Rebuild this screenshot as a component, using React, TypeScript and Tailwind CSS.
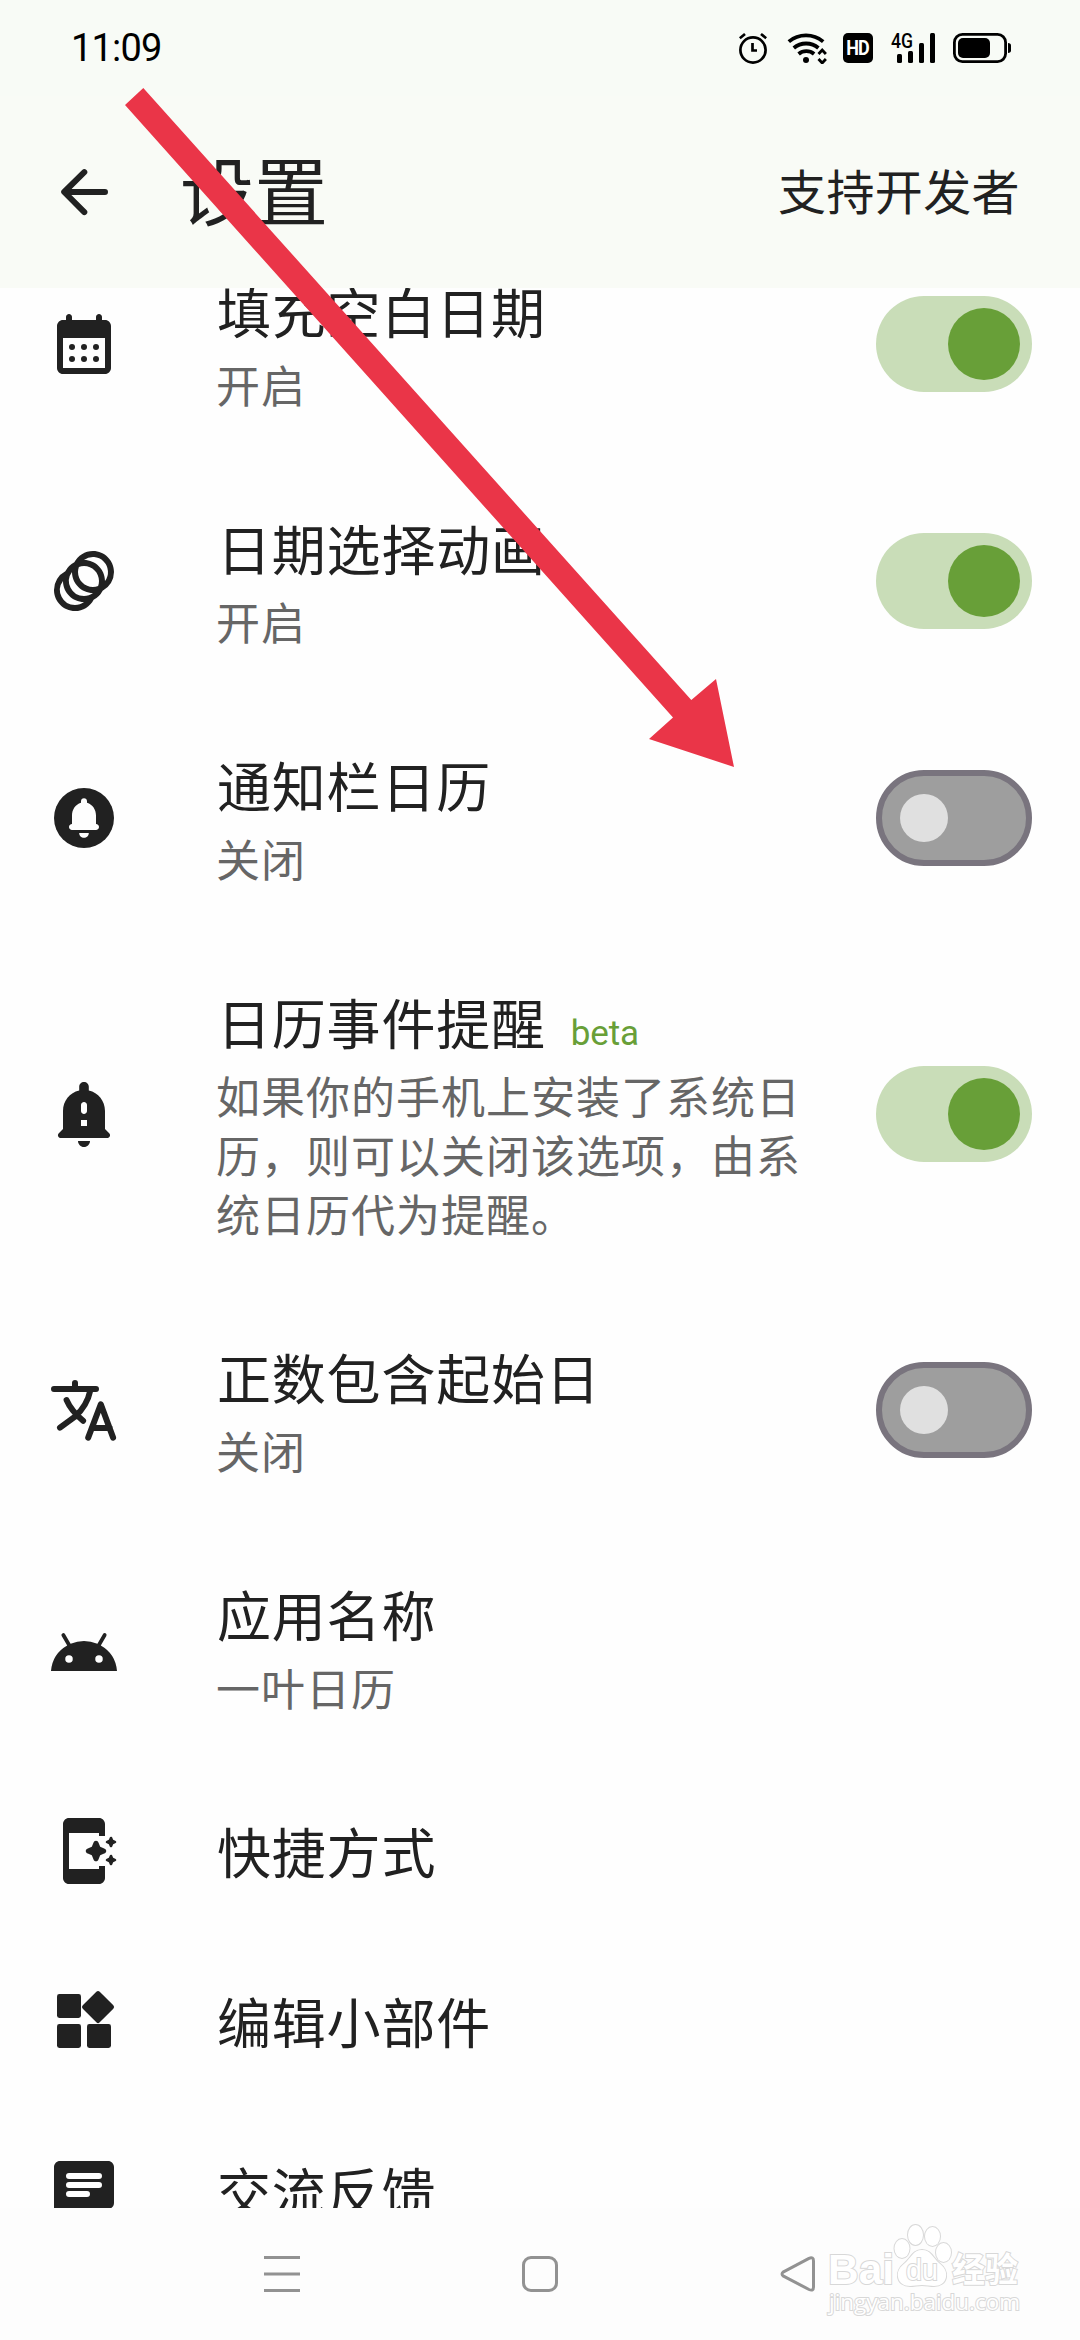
import type { ReactNode } from 'react';
import { MdAndroid, MdAnimation } from 'react-icons/md';

const Icon = ({ children }: { children: ReactNode }) => (
  <svg viewBox="0 0 24 24" className="size-[72px]" fill="currentColor">
    {children}
  </svg>
);

const BackIcon = () => (
  <svg
    viewBox="0 0 24 24"
    className="size-[72px]"
    fill="none"
    stroke="currentColor"
    strokeWidth="2"
    strokeLinecap="round"
    strokeLinejoin="round"
  >
    <path d="M12.1 5.4 5.4 12l6.7 6.7M5.8 12H19" />
  </svg>
);

const CalendarIcon = () => (
  <Icon>
    <path
      fillRule="evenodd"
      d="M7 2c.55 0 1 .45 1 1v1h8V3c0-.55.45-1 1-1s1 .45 1 1v1h1c1.1 0 2 .9 2 2v14c0 1.1-.9 2-2 2H5c-1.1 0-2-.9-2-2V6c0-1.1.9-2 2-2h1V3c0-.55.45-1 1-1ZM5 10v10h14V10Z"
    />
    {[8, 12, 16].map((x) => (
      <g key={x}>
        <circle cx={x} cy="13" r="1" />
        <circle cx={x} cy="17" r="1" />
      </g>
    ))}
  </Icon>
);

const CircleBellIcon = () => (
  <Icon>
    <circle cx="12" cy="12" r="10" />
    <path
      fill="#fefefe"
      d="M12 5.4c-.6 0-1 .4-1 1v.5C9.1 7.5 8 9.2 8 11.2V14c-.55 0-1 .45-1 1s.45 1 1 1h8c.55 0 1-.45 1-1s-.45-1-1-1v-2.8c0-2-1.1-3.7-3-4.3v-.5c0-.6-.4-1-1-1ZM10.4 17h3.2c0 .9-.7 1.6-1.6 1.6s-1.6-.7-1.6-1.6Z"
    />
  </Icon>
);

const ImportantBellIcon = () => (
  <Icon>
    <path
      fillRule="evenodd"
      d="M12 1.3c-.9 0-1.6.7-1.6 1.6v1.3C7.2 4.9 5 7.7 5 11v6l-1.4 1.4c-.6.6-.2 1.6.7 1.6h15.4c.9 0 1.3-1 .7-1.6L19 17v-6c0-3.3-2.2-6.1-5.4-6.8V2.9c0-.9-.7-1.6-1.6-1.6ZM12 8c.55 0 1 .45 1 1v2c0 .55-.45 1-1 1s-1-.45-1-1V9c0-.55.45-1 1-1Zm-1 6h2v2h-2ZM10 21h4c0 1.1-.9 2-2 2s-2-.9-2-2Z"
    />
  </Icon>
);

const TranslateIcon = () => (
  <svg
    viewBox="0 0 24 24"
    className="size-[72px]"
    fill="none"
    stroke="currentColor"
    strokeWidth="2"
    strokeLinecap="round"
    strokeLinejoin="round"
  >
    <path d="M2 5h14M9 3v2M14.1 5.5C13.4 8.8 11.7 11.8 9 14.2L4 17.9M6.2 8.7C7.3 11.3 9 13.3 11.7 15.6M13.4 21.2l4.2-11.1 4.1 11.1M14.6 18h6" />
  </svg>
);

const Sparkle = ({ x, y, r }: { x: number; y: number; r: number }) => (
  <path
    transform={`translate(${x} ${y}) scale(${r})`}
    d="M0-1c.14 0 .2.07.25.2l.16.39.39.16c.13.05.2.11.2.25s-.07.2-.2.25l-.39.16-.16.39C.2.93.14 1 0 1s-.2-.07-.25-.2l-.16-.39-.39-.16C-.93.2-1 .14-1 0s.07-.2.2-.25l.39-.16.16-.39C-.2-.93-.14-1 0-1Z"
  />
);

const ShortcutIcon = () => (
  <Icon>
    <path d="M7 1h10c1.1 0 2 .9 2 2v4h-2V6H7v12h10v-1h2v4c0 1.1-.9 2-2 2H7c-1.1 0-2-.9-2-2V3c0-1.1.9-2 2-2Z" />
    <Sparkle x={16} y={12} r={3.4} />
    <Sparkle x={21} y={9} r={1.75} />
    <Sparkle x={21} y={15} r={1.75} />
  </Icon>
);

const WidgetsIcon = () => (
  <Icon>
    <rect x="3" y="3" width="8" height="8" rx="0.8" />
    <rect x="3" y="13" width="8" height="8" rx="0.8" />
    <rect x="13" y="13" width="8" height="8" rx="0.8" />
    <rect x="12.68" y="3.34" width="8" height="8" rx="0.8" transform="rotate(45 16.68 7.34)" />
  </Icon>
);

const FeedbackIcon = () => (
  <Icon>
    <path
      fillRule="evenodd"
      d="M4 2h16c1.1 0 2 .9 2 2v12c0 1.1-.9 2-2 2H6l-4 4V4c0-1.1.9-2 2-2ZM7 6a1 1 0 0 0 0 2h10a1 1 0 0 0 0-2ZM7 9a1 1 0 0 0 0 2h10a1 1 0 0 0 0-2ZM7 12a1 1 0 0 0 0 2h6a1 1 0 0 0 0-2Z"
    />
  </Icon>
);

const Toggle = ({ on }: { on: boolean }) =>
  on ? (
    <div className="flex h-24 w-[156px] items-center justify-end rounded-full bg-[#c9ddb8] pr-3">
      <div className="size-[72px] rounded-full bg-[#689f38]" />
    </div>
  ) : (
    <div className="flex h-24 w-[156px] items-center rounded-full border-[6px] border-[#79747e] bg-[#9e9e9e] pl-[18px]">
      <div className="size-12 rounded-full bg-[#e0e0e0]" />
    </div>
  );

type Item = {
  title: string;
  icon: ReactNode;
  height: string;
  lines?: string[];
  badge?: string;
  on?: boolean;
};

const items: Item[] = [
  { title: '填充空白日期', lines: ['开启'], icon: <CalendarIcon />, on: true, height: 'h-[237px]' },
  { title: '日期选择动画', lines: ['开启'], icon: <MdAnimation className="size-[72px]" />, on: true, height: 'h-[237px]' },
  { title: '通知栏日历', lines: ['关闭'], icon: <CircleBellIcon />, on: false, height: 'h-[237px]' },
  {
    title: '日历事件提醒',
    badge: 'beta',
    lines: ['如果你的手机上安装了系统日', '历，则可以关闭该选项，由系', '统日历代为提醒。'],
    icon: <ImportantBellIcon />,
    on: true,
    height: 'h-[355px]',
  },
  { title: '正数包含起始日', lines: ['关闭'], icon: <TranslateIcon />, on: false, height: 'h-[237px]' },
  { title: '应用名称', lines: ['一叶日历'], icon: <MdAndroid className="mt-3 size-[72px]" />, height: 'h-[237.5px]' },
  { title: '快捷方式', icon: <ShortcutIcon />, height: 'h-[170px]' },
  { title: '编辑小部件', icon: <WidgetsIcon />, height: 'h-[170px]' },
  { title: '交流反馈', icon: <FeedbackIcon />, height: 'h-[170px]' },
];

const Row = ({ item }: { item: Item }) => (
  <div className={`flex shrink-0 items-center px-12 ${item.height}`}>
    <div className="w-[72px] shrink-0">{item.icon}</div>
    <div className="ml-[96px] flex-1">
      <div
        className={`flex items-baseline whitespace-nowrap pl-px text-[54px] leading-[80px] tracking-[0.8px] ${
          item.lines ? '-mt-1 mb-1' : '-mt-px'
        }`}
      >
        {item.title}
        {item.badge && (
          <span className="ml-[25px] font-[Roboto] text-[35px] leading-none tracking-[-0.2px] text-[#689f38]">{item.badge}</span>
        )}
      </div>
      {item.lines && (
        <div className="text-[44px] leading-[59px] tracking-[1px] text-[#666]">
          {item.lines.map((line) => (
            <div key={line} className="whitespace-nowrap">
              {line}
            </div>
          ))}
        </div>
      )}
    </div>
    {item.on !== undefined && <Toggle on={item.on} />}
  </div>
);

const StatusBar = () => (
  <div className="flex h-24 shrink-0 items-center bg-[#f8fbf6] pl-[71px] pr-[69px] text-black">
    <span className="flex-1 font-[Roboto] text-[38px] leading-none tracking-[-0.8px]">11:09</span>
    <svg className="h-8 w-7" viewBox="0 0 28 32" fill="none" stroke="currentColor" strokeWidth="2.7">
      <circle cx="14" cy="18" r="12.6" />
      <path d="M13.5 11v7.5H18M.8 6.3 6 2M22 2l5.200 4.300" />
    </svg>
    <svg className="ml-5 h-8 w-10" viewBox="0 0 40 32" fill="none" stroke="currentColor" strokeWidth="3.8">
      <path d="M1.8 9.6a27 27 0 0 1 34.4 0M6.8 16a19 19 0 0 1 24.600 0M11.6 22a12 12 0 0 1 15.5 0" />
      <path d="m31.5 22 3.700-4 3.700 4M31.5 27l3.700 4 3.700-4" strokeWidth="2.8" />
      <circle cx="19" cy="28" r="3" fill="currentColor" stroke="none" />
    </svg>
    <div className="ml-4 flex h-[30px] w-[30px] items-center justify-center rounded-[5px] bg-black font-[Roboto] text-[20px] font-bold leading-none tracking-[-1px] text-white">
      <span className="scale-x-90">HD</span>
    </div>
    <svg className="ml-[18px] h-[30px] w-[45px] overflow-visible" viewBox="0 0 45 30" fill="currentColor">
      <text x="0" y="15" fontSize="20" fontFamily="Roboto" fontWeight="500" textLength="22" lengthAdjust="spacingAndGlyphs">
        4G
      </text>
      <rect x="6" y="21" width="5" height="9" rx="1.5" />
      <rect x="17" y="18" width="5" height="12" rx="1.5" />
      <rect x="28" y="10" width="5" height="20" rx="1.5" />
      <rect x="39" y="0" width="5" height="30" rx="1.5" />
    </svg>
    <svg className="ml-[17px] h-[30px] w-[58px]" viewBox="0 0 58 30" fill="currentColor">
      <rect x="1.4" y="1.4" width="51.2" height="27.2" rx="8" fill="none" stroke="currentColor" strokeWidth="2.8" />
      <rect x="5" y="5" width="32" height="20" rx="5" />
      <path d="M55 10c2 0 3 1 3 2.500v5c0 1.500-1 2.500-3 2.500Z" />
    </svg>
  </div>
);

const Watermark = () => (
  <svg
    className="absolute bottom-[16px] left-[824px] h-[104px] w-[204px]"
    viewBox="824 2220 204 104"
    fill="#fff"
    stroke="#d8d8d8"
    strokeWidth="2"
    paintOrder="stroke"
  >
    <text x="828" y="2284" fontSize="43" fontWeight="700" fontFamily="Liberation Sans" textLength="66" lengthAdjust="spacingAndGlyphs">
      Bai
    </text>
    <ellipse cx="902" cy="2248.5" rx="7.5" ry="9.5" />
    <ellipse cx="915.5" cy="2235" rx="7.5" ry="10" />
    <ellipse cx="932.5" cy="2236.5" rx="7.5" ry="9.5" />
    <ellipse cx="943.5" cy="2252.5" rx="7.5" ry="9.5" />
    <path d="M922 2250c-9 0-11 8-17 13-5 4-8 8-7 14s6 9 12 9c4 0 8-1 12-1s8 1 12 1c6 0 11-3 12-9s-2-10-7-14c-6-5-8-13-17-13Z" />
    <text x="906" y="2280" fontSize="30" fontFamily="Liberation Sans" textLength="32" lengthAdjust="spacingAndGlyphs">
      du
    </text>
    <text x="952" y="2282" fontSize="34" fontWeight="700" fontFamily="Noto Sans CJK SC" textLength="66" lengthAdjust="spacingAndGlyphs">
      经验
    </text>
    <text x="829" y="2310" fontSize="22" fontFamily="Open Sans" textLength="191" lengthAdjust="spacingAndGlyphs">
      jingyan.baidu.com
    </text>
  </svg>
);

const NavBar = () => (
  <div className="relative flex h-[132px] shrink-0 items-center bg-[#fdfdfd] pl-[264px] text-[#929292]">
    <svg className="h-9 w-9" viewBox="0 0 36 36" stroke="currentColor" strokeWidth="3">
      <path d="M0 1.5h36M0 18h36M0 34.5h36" />
    </svg>
    <div className="ml-[222px] size-9 rounded-[9px] border-[3px] border-[#929292]" />
    <svg className="ml-[222px] h-9 w-9" viewBox="0 0 36 36" fill="none" stroke="currentColor" strokeWidth="3" strokeLinejoin="round">
      <path d="M3.5 15.8 29 2.3Q33.5.5 33.5 5v26q0 4.500-4.500 2.500L3.5 20.200Q.5 18 3.5 15.8Z" />
    </svg>
    <Watermark />
  </div>
);

export default function App() {
  return (
    <div className="relative flex h-[2340px] w-[1080px] flex-col overflow-hidden bg-[#fefefe] font-['Noto_Sans_CJK_SC',sans-serif] text-[#212121]">
      <StatusBar />
      <header className="flex h-48 shrink-0 items-center bg-[#f9fbf6] pl-12 pr-[60px]">
        <BackIcon />
        <h1 className="-mt-2 ml-[60px] flex-1 text-[74px] leading-none">设置</h1>
        <span className="-mt-1.5 text-[48px] leading-none tracking-[0.4px]">支持开发者</span>
      </header>
      <main className="min-h-0 flex-1 overflow-hidden">
        <div className="-mt-[62.5px] flex flex-col">
          {items.map((item) => (
            <Row key={item.title} item={item} />
          ))}
        </div>
      </main>
      <NavBar />
      <svg className="pointer-events-none absolute left-[120px] top-[80px] h-[700px] w-[630px]" viewBox="120 80 630 700" fill="#ea3548">
        <path d="M143.3 88 691.3 700 716 679 734 767 649 739 673 717.5 125 105Z" />
      </svg>
    </div>
  );
}
